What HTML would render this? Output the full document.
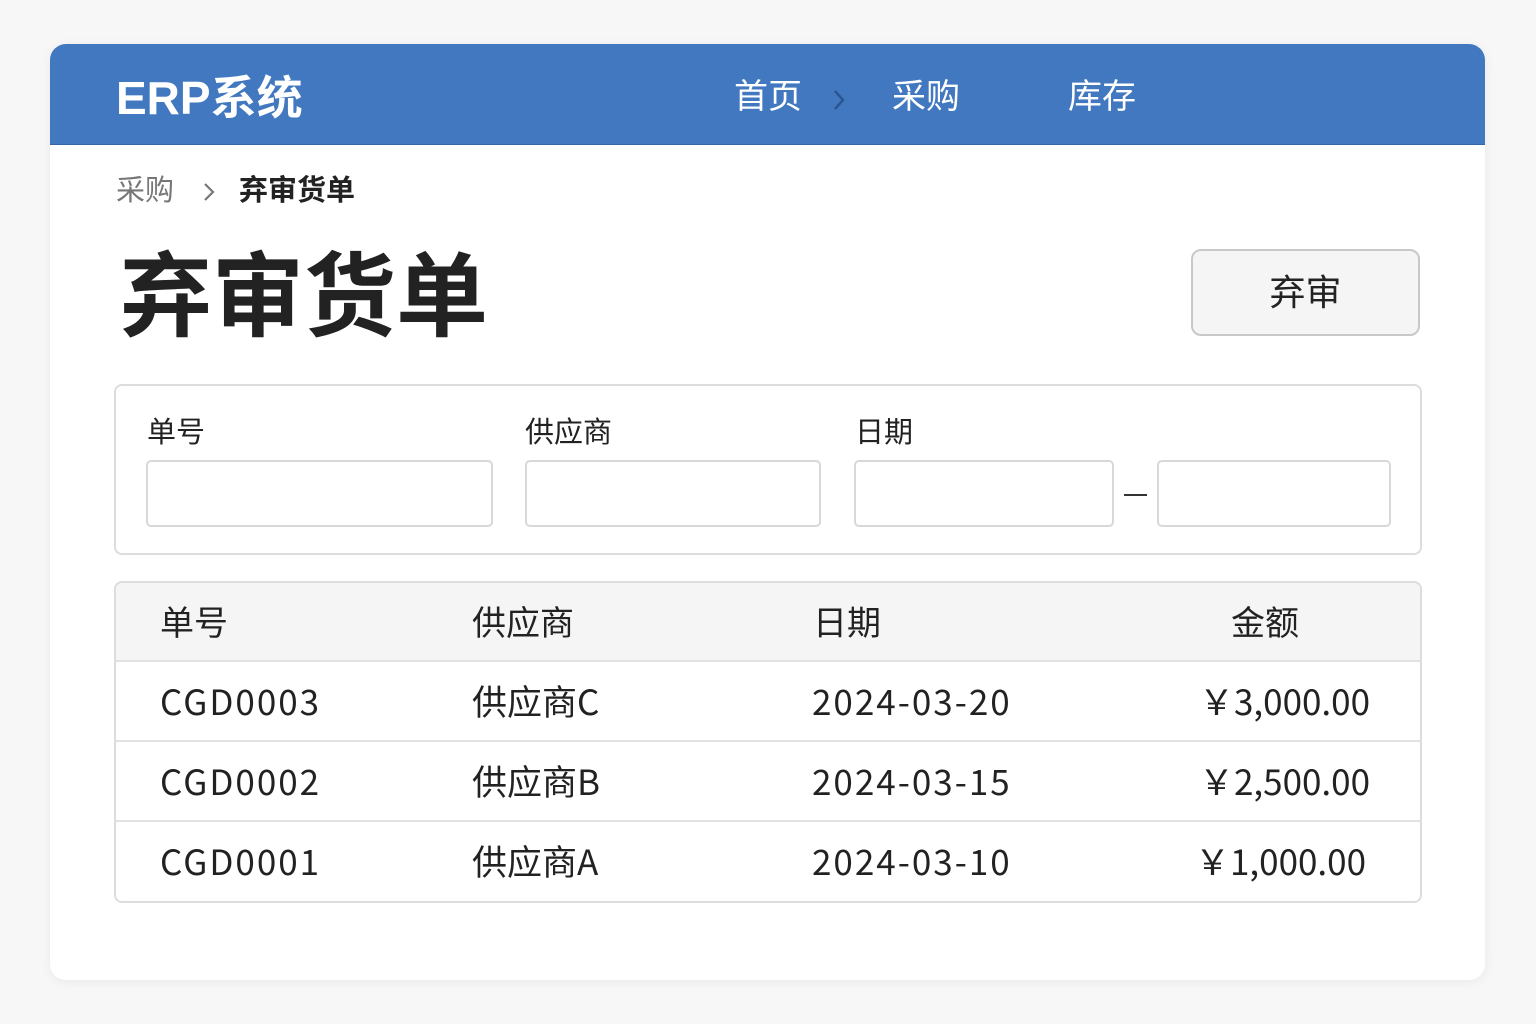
<!DOCTYPE html>
<html><head><meta charset="utf-8"><style>
*{box-sizing:border-box;margin:0;padding:0}
body{width:1536px;height:1024px;background:#f7f7f7;font-family:"Liberation Sans","Noto Sans CJK SC",sans-serif;position:relative;overflow:hidden;color:#222}
.card{position:absolute;left:50px;top:44px;width:1435px;height:936px;background:#fff;border-radius:16px;box-shadow:0 2px 12px rgba(0,0,0,.06);overflow:hidden}
.hdr{position:absolute;left:0;top:0;width:100%;height:101px;background:#4178bf;border-bottom:1px solid #3565a8}
.abs{position:absolute;white-space:nowrap;line-height:1}
.box{position:absolute;border:2px solid #ddd;border-radius:8px;background:#fff}
.inp{position:absolute;border:2px solid #d8d8d8;border-radius:5px;background:#fff;height:67px;top:460px}
.row{position:absolute;left:0;width:100%;height:80px;border-top:2px solid #e2e2e2;font-size:35px;font-family:"Noto Sans CJK SC",sans-serif}
.row span{position:absolute;top:21px;line-height:1;white-space:nowrap}
.row span.w{letter-spacing:2px}
.cjk{font-family:"Noto Sans CJK SC",sans-serif}
</style></head><body>
<div class="card">
 <div class="hdr">
  <div class="abs" style="left:66px;top:31px;font-size:46px;font-weight:bold;color:#fff">ERP系统</div>
  <div class="abs" style="left:684px;top:36px;font-size:34px;color:#fff">首页</div>
  <svg class="abs" style="left:782px;top:44px" width="14" height="24" viewBox="0 0 14 24"><path d="M3 3 L11 12 L3 21" fill="none" stroke="#2a5490" stroke-width="2.4"/></svg>
  <div class="abs" style="left:842px;top:36px;font-size:34px;color:#fff">采购</div>
  <div class="abs" style="left:1018px;top:36px;font-size:34px;color:#fff">库存</div>
 </div>
 <div class="abs" style="left:66px;top:133px;font-size:29px;color:#777">采购</div>
 <svg class="abs" style="left:152px;top:137px" width="14" height="22" viewBox="0 0 14 22"><path d="M3 3 L11 11 L3 19" fill="none" stroke="#777" stroke-width="2.2"/></svg>
 <div class="abs" style="left:189px;top:133px;font-size:29px;font-weight:bold;color:#222">弃审货单</div>
 <div class="abs" style="left:70px;top:208px;font-size:92px;font-weight:bold;color:#222">弃审货单</div>
 <div class="abs" style="left:1141px;top:205px;width:229px;height:87px;border:2px solid #c8c8c8;border-radius:10px;background:#f5f5f5;font-size:36px;text-align:center;line-height:83px">弃审</div>
</div>
<div class="box" style="left:114px;top:384px;width:1308px;height:171px"></div>
<div class="abs" style="left:147px;top:419px;font-size:29px">单号</div>
<div class="abs" style="left:525px;top:419px;font-size:29px">供应商</div>
<div class="abs" style="left:855px;top:419px;font-size:29px">日期</div>
<div class="inp" style="left:146px;width:347px"></div>
<div class="inp" style="left:525px;width:296px"></div>
<div class="inp" style="left:854px;width:260px"></div>
<div class="abs" style="left:1124px;top:494px;width:23px;height:2px;background:#333"></div>
<div class="inp" style="left:1157px;width:234px"></div>
<div class="box" style="left:114px;top:581px;width:1308px;height:322px;overflow:hidden">
 <div class="cjk" style="position:absolute;left:0;top:0;width:100%;height:77px;background:#f5f5f5;font-size:34px">
  <span class="abs" style="left:44px;top:21px">单号</span>
  <span class="abs" style="left:356px;top:21px">供应商</span>
  <span class="abs" style="left:697px;top:21px">日期</span>
  <span class="abs" style="left:1115px;top:21px">金额</span>
 </div>
 <div class="row" style="top:77px"><span class="w" style="left:44px">CGD0003</span><span style="left:356px">供应商C</span><span class="w" style="left:696px">2024-03-20</span><span style="right:50px">￥3,000.00</span></div>
 <div class="row" style="top:157px"><span class="w" style="left:44px">CGD0002</span><span style="left:356px">供应商B</span><span class="w" style="left:696px">2024-03-15</span><span style="right:50px">￥2,500.00</span></div>
 <div class="row" style="top:237px"><span class="w" style="left:44px">CGD0001</span><span style="left:356px">供应商A</span><span class="w" style="left:696px">2024-03-10</span><span style="right:54px">￥1,000.00</span></div>
</div>
</body></html>
